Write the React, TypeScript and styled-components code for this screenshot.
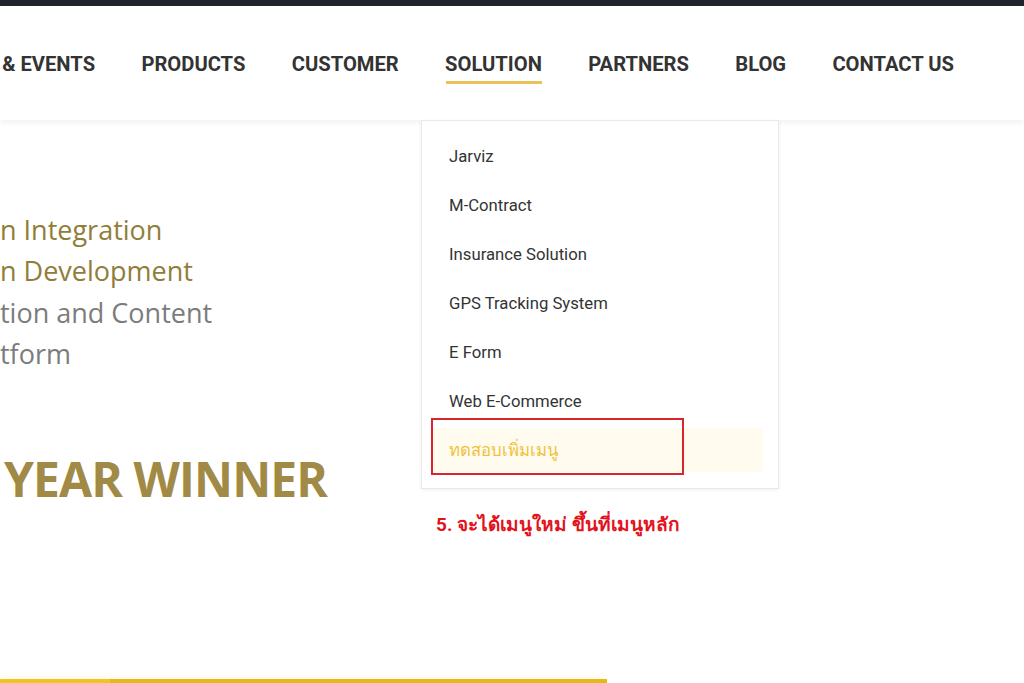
import React from "react";
import styled, { createGlobalStyle } from "styled-components";

const Global = createGlobalStyle`
  html, body { margin: 0; padding: 0; background: #ffffff; }
  body { width: 1024px; height: 683px; overflow: hidden; font-family: Roboto, "Liberation Sans", sans-serif; }
  #root { width: 1024px; height: 683px; }
`;

const Page = styled.div`
  position: relative;
  width: 1024px;
  height: 683px;
  overflow: hidden;
  display: flex;
  flex-direction: column;
  background: #fff;
`;

const TopStrip = styled.div`
  height: 6px;
  background: #1d242c;
  flex: none;
`;

const Header = styled.header`
  position: relative;
  z-index: 5;
  height: 114px;
  flex: none;
  background: #fff;
  box-shadow: 0 3px 5px rgba(0, 0, 0, 0.05);
  display: flex;
  justify-content: flex-end;
  padding-right: 70px;
`;

const Nav = styled.nav`
  display: flex;
  gap: 46.3px;
  height: 100%;
`;

const NavItem = styled.div`
  position: relative;
  height: 100%;
  display: flex;
  align-items: center;
  padding-top: 1px;
  box-sizing: border-box;
`;

const NavLabel = styled.span<{ $active?: boolean }>`
  position: relative;
  font-family: Roboto, "Liberation Sans", sans-serif;
  font-weight: 700;
  font-size: 20.2px;
  color: #333333;
  white-space: nowrap;
  &::after {
    content: "";
    display: ${(p) => (p.$active ? "block" : "none")};
    position: absolute;
    left: 1px;
    right: 0;
    bottom: -8px;
    height: 3px;
    background: #e8c35a;
  }
`;

const Dropdown = styled.ul`
  position: absolute;
  top: 100%;
  left: -24px;
  width: 358px;
  margin: 0;
  list-style: none;
  box-sizing: border-box;
  padding: 13px 15px 16px 10px;
  background: #fff;
  border: 1px solid #e9e9e9;
  box-shadow: 0 1px 4px rgba(0, 0, 0, 0.06);
  display: flex;
  flex-direction: column;
  gap: 5px;
`;

const DropItem = styled.li<{ $highlight?: boolean }>`
  height: 44px;
  display: flex;
  align-items: center;
  padding-left: 17px;
  font-family: Roboto, "Liberation Sans", sans-serif;
  font-size: 16.7px;
  color: ${(p) => (p.$highlight ? "#efc23a" : "#333333")};
  background: ${(p) => (p.$highlight ? "#fffbef" : "transparent")};
`;

const Callout = styled.div`
  position: absolute;
  left: 431px;
  top: 418px;
  width: 253px;
  height: 57px;
  box-sizing: border-box;
  border: 2px solid #d8262c;
  z-index: 10;
`;

const Caption = styled.div`
  position: absolute;
  left: 436px;
  top: 509px;
  font-family: Roboto, "Noto Sans", sans-serif;
  font-weight: 700;
  font-size: 19px;
  color: #e3121c;
  white-space: nowrap;
  z-index: 10;
`;

const Hero = styled.section`
  flex: 1;
  display: flex;
  flex-direction: column;
  padding-top: 89px;
`;

const ServiceList = styled.div`
  display: flex;
  flex-direction: column;
`;

const ServiceLine = styled.div<{ $gold?: boolean }>`
  font-family: "Open Sans", "Noto Sans", sans-serif;
  font-size: 27px;
  line-height: 41.3px;
  color: ${(p) => (p.$gold ? "#8f7e3a" : "#7c7c7c")};
  white-space: nowrap;
`;

const Winner = styled.div`
  margin-top: 78px;
  margin-left: 4px;
  font-family: "Open Sans", "Noto Sans", sans-serif;
  font-weight: 700;
  font-size: 48px;
  line-height: 54px;
  letter-spacing: -0.9px;
  color: #a08a45;
  white-space: nowrap;
`;

const BottomBar = styled.div`
  position: absolute;
  left: 0;
  bottom: 0;
  width: 607px;
  height: 4px;
  display: flex;
  box-shadow: 0 -4px 6px rgba(245, 215, 80, 0.12);
`;

const BarSeg = styled.div<{ $w: number; $c: string }>`
  width: ${(p) => p.$w}px;
  height: 100%;
  background: ${(p) => p.$c};
`;

const navItems = ["& EVENTS", "PRODUCTS", "CUSTOMER", "SOLUTION", "PARTNERS", "BLOG", "CONTACT US"];
const menu = ["Jarviz", "M-Contract", "Insurance Solution", "GPS Tracking System", "E Form", "Web E-Commerce"];

export default function App() {
  return (
    <Page>
      <Global />
      <TopStrip />
      <Header>
        <Nav>
          {navItems.map((n) => (
            <NavItem key={n}>
              <NavLabel $active={n === "SOLUTION"}>{n}</NavLabel>
              {n === "SOLUTION" && (
                <Dropdown>
                  {menu.map((m) => (
                    <DropItem key={m}>{m}</DropItem>
                  ))}
                  <DropItem $highlight>ทดสอบเพิ่มเมนู</DropItem>
                </Dropdown>
              )}
            </NavItem>
          ))}
        </Nav>
      </Header>
      <Hero>
        <ServiceList>
          <ServiceLine $gold>n Integration</ServiceLine>
          <ServiceLine $gold>n Development</ServiceLine>
          <ServiceLine>tion and Content</ServiceLine>
          <ServiceLine>tform</ServiceLine>
        </ServiceList>
        <Winner>YEAR WINNER</Winner>
      </Hero>
      <Callout />
      <Caption>5. จะได้เมนูใหม่ ขึ้นที่เมนูหลัก</Caption>
      <BottomBar>
        <BarSeg $w={110} $c="#f3c41c" />
        <BarSeg $w={497} $c="#e7b814" />
      </BottomBar>
    </Page>
  );
}
